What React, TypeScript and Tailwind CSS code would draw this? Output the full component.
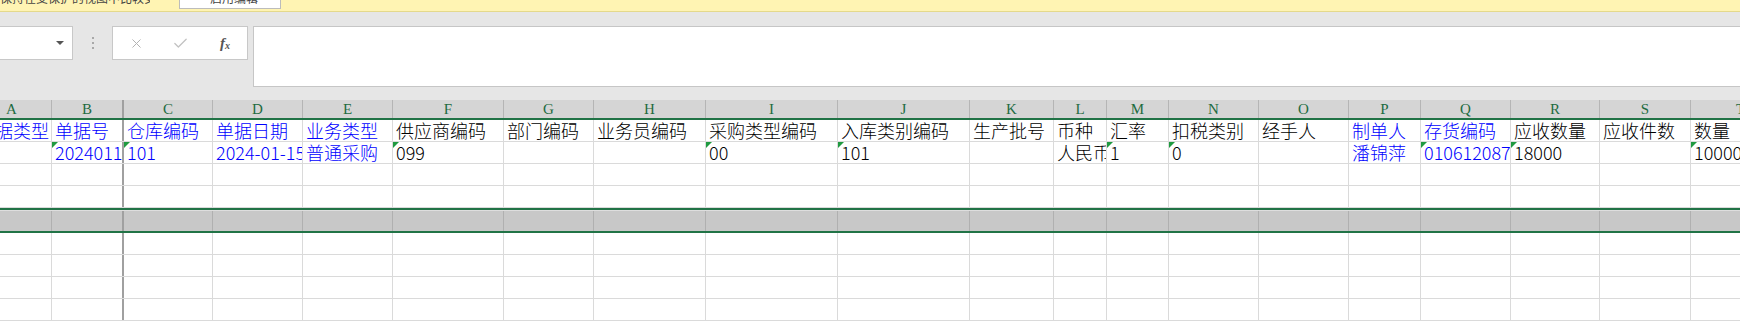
import { X, Check } from "lucide-react";

type TCol = {
    l: string;
    w: string;
    h: string;
    d?: string;
    blue?: boolean;
    tri?: boolean;
    frozen?: boolean;
    first?: boolean;
};

const cols: TCol[] = [
    { l: "A", w: "w-[52px]", h: "单据类型", blue: true, first: true },
    { l: "B", w: "w-[72px]", h: "单据号", d: "2024011518", blue: true, tri: true, frozen: true },
    { l: "C", w: "w-[89px]", h: "仓库编码", d: "101", blue: true, tri: true },
    { l: "D", w: "w-[90px]", h: "单据日期", d: "2024-01-15", blue: true },
    { l: "E", w: "w-[90px]", h: "业务类型", d: "普通采购", blue: true },
    { l: "F", w: "w-[111px]", h: "供应商编码", d: "099", tri: true },
    { l: "G", w: "w-[90px]", h: "部门编码" },
    { l: "H", w: "w-[112px]", h: "业务员编码" },
    { l: "I", w: "w-[132px]", h: "采购类型编码", d: "00", tri: true },
    { l: "J", w: "w-[132px]", h: "入库类别编码", d: "101", tri: true },
    { l: "K", w: "w-[84px]", h: "生产批号" },
    { l: "L", w: "w-[53px]", h: "币种", d: "人民币" },
    { l: "M", w: "w-[62px]", h: "汇率", d: "1", tri: true },
    { l: "N", w: "w-[90px]", h: "扣税类别", d: "0", tri: true },
    { l: "O", w: "w-[90px]", h: "经手人" },
    { l: "P", w: "w-[72px]", h: "制单人", d: "潘锦萍", blue: true },
    { l: "Q", w: "w-[90px]", h: "存货编码", d: "0106120877", blue: true, tri: true },
    { l: "R", w: "w-[89px]", h: "应收数量", d: "18000", tri: true },
    { l: "S", w: "w-[91px]", h: "应收件数" },
    { l: "T", w: "w-[100px]", h: "数量", d: "100000", tri: true },
];

const sep = (c: TCol, base: string) =>
    c.frozen ? "border-r-2 border-[#a0a0a0]" : `border-r ${base}`;

const LetterRow = () => (
    <div className="flex h-[18px] bg-[#d5d5d5]">
        {cols.map((c) => (
            <div
                key={c.l}
                className={`${c.w} shrink-0 flex items-center ${c.first ? "justify-start pl-[6px]" : "justify-center"} ${sep(c, "border-[#b5b5b5]")} text-[15px] leading-[18px] text-[#1e6b41] font-['Liberation_Serif',serif]`}
            >
                {c.l}
            </div>
        ))}
    </div>
);

const BodyRow = ({ kind }: { kind: "head" | "data" | "empty" }) => (
    <div className="flex h-[22px] border-b border-[#dadada]">
        {cols.map((c) => {
            const text = kind === "head" ? c.h : kind === "data" ? c.d ?? "" : "";
            return (
                <div
                    key={c.l}
                    className={`${c.w} shrink-0 relative overflow-hidden whitespace-nowrap flex items-center ${c.first ? "justify-end pr-[2px]" : "pl-[3px]"} ${sep(c, "border-[#dadada]")} text-[18px] leading-[21px] font-light ${c.blue ? "text-[#0000ff]" : "text-black"}`}
                >
                    {kind === "data" && c.tri && (
                        <span className="absolute top-0 left-0 w-0 h-0 border-t-[6px] border-t-[#1f9a40] border-r-[6px] border-r-transparent" />
                    )}
                    <span className="shrink-0">{text}</span>
                </div>
            );
        })}
    </div>
);

const BandRow = () => (
    <div className="flex h-[21px] bg-[#c8c8c8] border-t border-[#dedede]">
        {cols.map((c) => (
            <div key={c.l} className={`${c.w} shrink-0 ${sep(c, "border-[#b0b0b0]")}`} />
        ))}
    </div>
);

export default function App() {
    return (
        <div className="w-[1740px] h-[322px] overflow-hidden bg-white flex flex-col font-['Noto_Sans_CJK_SC',sans-serif]">
            {/* protected view bar */}
            <div className="h-[12px] shrink-0 bg-[#fff4b3] border-b border-[#e4d98c] flex items-end overflow-hidden">
                <div className="w-[150px] h-[12px] overflow-hidden relative">
                    <span className="absolute left-0 bottom-[6px] text-[12px] leading-[14px] text-[#444] whitespace-nowrap">
                        保持在受保护的视图中比较安全。
                    </span>
                </div>
                <div className="ml-[29px] self-start w-[102px] h-[9px] bg-white border-x border-b border-[#bcbcbc] overflow-hidden relative">
                    <span className="absolute left-[30px] bottom-[3px] text-[12px] leading-[14px] text-[#444]">启用编辑</span>
                </div>
            </div>

            {/* formula bar */}
            <div className="h-[88px] shrink-0 bg-[#e6e6e6] flex items-start pt-[14px]">
                <div className="w-[73px] h-[34px] bg-white border-y border-r border-[#c8c8c8] flex items-center justify-end pr-[8px]">
                    <span className="w-0 h-0 border-x-[4px] border-x-transparent border-t-[4px] border-t-[#555]" />
                </div>
                <div className="w-[39px] h-[34px] flex flex-col items-center justify-center gap-[3px]">
                    <span className="w-[2px] h-[2px] bg-[#a8a8a8]" />
                    <span className="w-[2px] h-[2px] bg-[#a8a8a8]" />
                    <span className="w-[2px] h-[2px] bg-[#a8a8a8]" />
                </div>
                <div className="w-[136px] h-[34px] bg-white border border-[#c8c8c8] flex items-center">
                    <div className="w-[45px] flex justify-center pl-[2px]">
                        <X size={15} strokeWidth={1.6} color="#b3b3b3" />
                    </div>
                    <div className="w-[45px] flex justify-center">
                        <Check size={17} strokeWidth={1.8} color="#c2c2c2" />
                    </div>
                    <div className="w-[44px] flex justify-center font-['Liberation_Serif',serif] italic font-bold text-[15px] text-[#555] leading-none">
                        f<span className="text-[10px] mt-[5px]">x</span>
                    </div>
                </div>
                <div className="ml-[5px] flex-1 h-[61px] bg-white border-y border-l border-[#c6c6c6]" />
            </div>

            <LetterRow />
            <div className="h-[2px] shrink-0 bg-[#217346]" />
            <BodyRow kind="head" />
            <BodyRow kind="data" />
            <BodyRow kind="empty" />
            <BodyRow kind="empty" />
            <div className="h-[2px] shrink-0 bg-[#217346]" />
            <BandRow />
            <div className="h-[2px] shrink-0 bg-[#217346]" />
            <BodyRow kind="empty" />
            <BodyRow kind="empty" />
            <BodyRow kind="empty" />
            <BodyRow kind="empty" />
        </div>
    );
}
